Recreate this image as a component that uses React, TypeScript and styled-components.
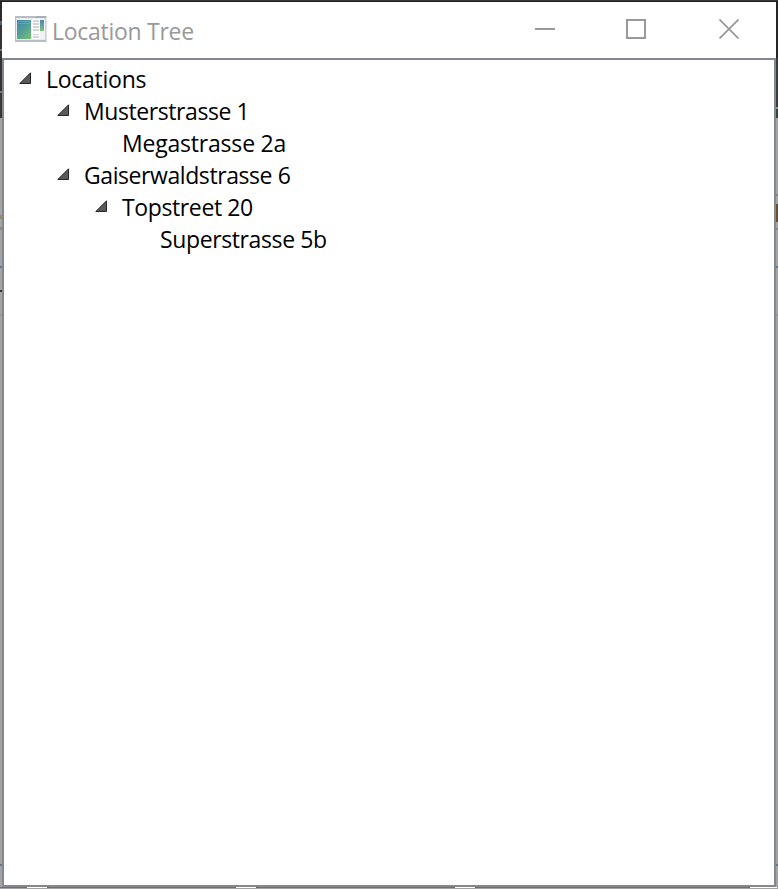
import React from "react";
import styled, { createGlobalStyle } from "styled-components";

const GlobalStyle = createGlobalStyle`
  body { margin: 0; background: #a3a3a3; overflow: hidden; }
  * { box-sizing: border-box; }
`;

const Desktop = styled.div`
  display: grid;
  grid-template: 2px 885px 2px / 2px 774px 2px;
  width: 778px;
  height: 889px;
  font-family: "Open Sans", "Noto Sans", sans-serif;
`;

const TopEdge = styled.div`
  grid-column: 1 / -1;
  background: linear-gradient(#3b393b 50%, #1f1d20 50%);
`;

const LeftEdge = styled.div`
  background: linear-gradient(
    #2b292c 0 19px, #536075 19px 23px, #343235 23px 47px, #777 47px 49px,
    #343235 49px 89px, #777 89px 91px, #3b3739 91px 116px,
    #a5a5a5 116px 213px, #a08860 213px 217px, #a5a5a5 217px 225px,
    #a08860 225px 228px, #a5a5a5 228px 264px, #69778b 264px 266px,
    #a5a5a5 266px 288px, #333 288px 290px, #a5a5a5 290px 312px,
    #969799 312px 314px, #a3a3a3 314px 862px, #68768b 862px 864px, #a3a3a3 864px
  );
`;

const RightEdge = styled.div`
  background: linear-gradient(
    #252528 0 56px, #383c3d 56px 105px, #929292 105px 107px,
    #34463c 107px 116px, #a5a5a5 116px 192px, #818387 192px 194px,
    #a5a5a5 194px 202px, #6b4f34 202px 220px, #a5a5a5 220px 226px,
    #85878c 226px 228px, #a5a5a5 228px 264px, #69778b 264px 266px,
    #a5a5a5 266px 312px, #969799 312px 314px, #a3a3a3 314px 862px,
    #68768b 862px 864px, #a3a3a3 864px
  );
`;

const BottomEdge = styled.div`
  grid-column: 1 / -1;
  background:
    linear-gradient(90deg,
      transparent 25px, #666 25px 27px, #fff 27px 47px, #666 47px 49px,
      transparent 49px 234px, #666 234px 236px, #fff 236px 256px, #666 256px 258px,
      transparent 258px 453px, #666 453px 455px, #fff 455px 475px, #666 475px 477px,
      transparent 477px 748px, #666 748px 750px, #fff 750px 777px, #999 777px) 0 0 / 100% 1px no-repeat,
    linear-gradient(#707070 50%, #a2a2a2 50%);
`;

const Window = styled.main`
  display: flex;
  flex-direction: column;
  background: #fff;
`;

const TitleBar = styled.header`
  display: flex;
  height: 56px;
  flex: none;
  padding-left: 13px;
`;

const Title = styled.h1`
  margin: 0 0 0 5px;
  flex: 1;
  font-size: 23px;
  font-weight: 400;
  line-height: 58px;
  letter-spacing: -0.28px;
  color: #999;
  white-space: nowrap;
`;

const AppIcon = styled.svg`
  width: 32px;
  height: 26px;
  margin-top: 14px;
`;

const Controls = styled.div`
  display: flex;
  padding-right: 1px;
`;

const Control = styled.button<{ $width: number }>`
  display: grid;
  place-items: center;
  width: ${({ $width }) => $width}px;
  height: 54px;
  padding: 0;
  border: 0;
  background: none;
  color: #999;
  svg { display: block; }
`;

const Tree = styled.section`
  flex: 1;
  border: 2px solid #828790;
  padding: 4px 0 0 12px;
`;

const Row = styled.div<{ $level: number }>`
  display: flex;
  height: 32px;
  padding-left: ${({ $level }) => $level * 38}px;
`;

const Toggle = styled.svg`
  width: 14px;
  height: 14px;
  flex: none;
  margin: 7px 14px 0 2px;
`;

const Spacer = styled.span`
  width: 30px;
  flex: none;
`;

const Label = styled.span<{ $tracking: number }>`
  font-size: 23px;
  line-height: 30px;
  letter-spacing: ${({ $tracking }) => $tracking}px;
  color: #000;
  white-space: nowrap;
`;

const locations = [
  { name: "Locations", level: 0, open: true, tracking: -0.26 },
  { name: "Musterstrasse 1", level: 1, open: true, tracking: -0.42 },
  { name: "Megastrasse 2a", level: 2, open: false, tracking: -0.2 },
  { name: "Gaiserwaldstrasse 6", level: 1, open: true, tracking: -0.42 },
  { name: "Topstreet 20", level: 2, open: true, tracking: -0.38 },
  { name: "Superstrasse 5b", level: 3, open: false, tracking: -0.38 },
];

function WindowIcon() {
  return (
    <AppIcon viewBox="0 0 32 26">
      <defs>
        <linearGradient id="pane" x1="0" y1="0" x2="0.7" y2="1">
          <stop offset="0" stopColor="#3f82ad" />
          <stop offset="0.5" stopColor="#4f9c9b" />
          <stop offset="1" stopColor="#70b978" />
        </linearGradient>
        <linearGradient id="strip" x1="0" y1="0" x2="0" y2="1">
          <stop stopColor="#5183b5" />
          <stop offset="1" stopColor="#79c27c" />
        </linearGradient>
      </defs>
      <path fill="#b7bdc3" d="M0 0h31.5v26H0z" />
      <path fill="#e9ebed" d="M1 2h29.5v22H1z" />
      <path fill="#a4b0b8" d="M21 0h10v2H21z" />
      <path fill="#f1f2f3" d="M2 3h28v20H2z" />
      <path fill="#fff" d="M17 3h8v20h-8z" />
      <path fill="url(#pane)" d="M2 4h14v19H2z" />
      <path fill="#92b8ca" opacity=".4" d="M3 5h12v1H3zM3 7h12v1H3z" />
      <path fill="#d3d5d7" d="M18 4h6v2h-6zM18 7h6v2h-6zM18 10h6v2h-6zM18 13h6v2h-6zM18 18h6v1h-6zM18 20h6v2h-6z" />
      <path fill="url(#strip)" d="M25 4h4v11h-4z" />
    </AppIcon>
  );
}

export default function App() {
  return (
    <>
      <GlobalStyle />
      <Desktop>
        <TopEdge />
        <LeftEdge />
        <Window>
          <TitleBar>
            <WindowIcon />
            <Title>Location Tree</Title>
            <Controls>
              <Control aria-label="Minimize" $width={88}>
                <svg width="20" height="20"><path fill="currentColor" d="M0 9h20v2H0z" /></svg>
              </Control>
              <Control aria-label="Maximize" $width={94}>
                <svg width="20" height="20"><path fill="none" stroke="currentColor" strokeWidth="2" d="M1 1h18v18H1z" /></svg>
              </Control>
              <Control aria-label="Close" $width={92}>
                <svg width="20" height="20"><path fill="none" stroke="currentColor" strokeWidth="1.8" d="m.5.5 19 19m0-19-19 19" /></svg>
              </Control>
            </Controls>
          </TitleBar>
          <Tree role="tree">
            {locations.map(({ name, level, open, tracking }) => (
              <Row key={name} $level={level} role="treeitem">
                {open ? (
                  <Toggle viewBox="0 0 14 14">
                    <path d="M1.8 12.5H12.5V1.8Z" fill="#595959" stroke="#262626" />
                  </Toggle>
                ) : <Spacer />}
                <Label $tracking={tracking}>{name}</Label>
              </Row>
            ))}
          </Tree>
        </Window>
        <RightEdge />
        <BottomEdge />
      </Desktop>
    </>
  );
}
